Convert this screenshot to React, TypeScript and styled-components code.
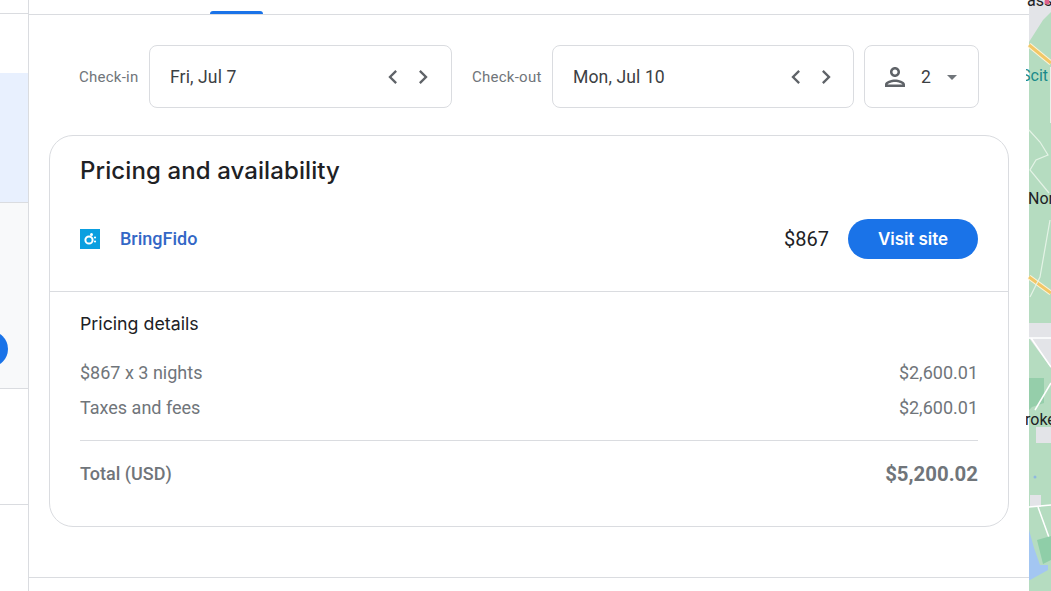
import React from 'react'
import styled, { createGlobalStyle } from 'styled-components'

const Global = createGlobalStyle`
html, body { margin: 0; padding: 0; background: #fff; }
* { box-sizing: border-box; }
body { font-family: Roboto, "Liberation Sans", sans-serif; }
`

const Page = styled.div`
display: flex;
width: 1051px;
height: 591px;
overflow: hidden;
`

const Sidebar = styled.div`
width: 29px;
flex-shrink: 0;
border-right: 1px solid #dadce0;
display: flex;
flex-direction: column;
`

const SideRow = styled.div<{ $h: number; $bg: string; $line?: boolean }>`
height: ${p => p.$h}px;
flex-shrink: 0;
background: ${p => p.$bg};
border-bottom: ${p => (p.$line ? '1px solid #dadce0' : 'none')};
display: flex;
align-items: center;
overflow: hidden;
`

const SideDot = styled.div`
width: 36px;
height: 36px;
border-radius: 50%;
background: #1a73e8;
margin: 106px 0 0 -28px;
flex-shrink: 0;
`

const Main = styled.div`
width: 1000px;
flex-shrink: 0;
display: flex;
flex-direction: column;
`

const TabStrip = styled.div`
height: 15px;
border-bottom: 1px solid #dadce0;
padding-left: 181px;
display: flex;
align-items: flex-end;
`

const TabMark = styled.div`
width: 53px;
height: 3px;
background: #1a73e8;
border-radius: 3px 3px 0 0;
`

const DateRow = styled.div`
display: flex;
align-items: center;
padding: 30px 0 0 50px;
height: 93px;
`

const DateLabel = styled.span<{ $w: number; $gap?: number }>`
width: ${p => p.$w}px;
margin-left: ${p => p.$gap ?? 0}px;
font-size: 15px;
letter-spacing: 0.25px;
color: #70757a;
flex-shrink: 0;
`

const Field = styled.div<{ $w: number }>`
width: ${p => p.$w}px;
height: 63px;
flex-shrink: 0;
border: 1px solid #dadce0;
border-radius: 8px;
display: flex;
align-items: center;
padding-left: 20px;
font-size: 17.6px;
letter-spacing: 0.1px;
color: #3c4043;
`

const DateText = styled.span`
flex: 1;
`

const Arrows = styled.div<{ $end: number }>`
display: flex;
gap: 2px;
padding-right: ${p => p.$end}px;
`

const ArrowIcon = styled.svg`
width: 28px;
height: 28px;
display: block;
fill: #5f6368;
`

const GuestField = styled(Field)`
margin-left: 10px;
padding-left: 15px;
`

const GuestIcon = styled.svg`
width: 30px;
height: 30px;
fill: #5f6368;
flex-shrink: 0;
`

const GuestCount = styled.span`
margin-left: 11px;
`

const Caret = styled.div`
width: 0;
height: 0;
margin: 1px 0 0 16px;
border-left: 5px solid transparent;
border-right: 5px solid transparent;
border-top: 5px solid #70757a;
`

const Card = styled.div`
width: 960px;
height: 392px;
margin: 27px 0 0 20px;
border: 1px solid #dadce0;
border-radius: 24px;
flex-shrink: 0;
`

const CardTop = styled.div`
height: 156px;
border-bottom: 1px solid #dadce0;
padding: 20px 30px 0;
`

const Title = styled.h2`
margin: 0;
font-family: Inter, sans-serif;
font-size: 24px;
line-height: 30px;
font-weight: 500;
letter-spacing: 0.1px;
color: #202124;
`

const Offer = styled.div`
display: flex;
align-items: center;
margin-top: 33px;
`

const Logo = styled.svg`
width: 20px;
height: 20px;
flex-shrink: 0;
display: block;
`

const Provider = styled.span`
margin-left: 20px;
padding-bottom: 2px;
flex: 1;
font-size: 18px;
font-weight: 500;
color: #3367c6;
`

const OfferPrice = styled.span`
font-size: 20px;
color: #202124;
margin-right: 19px;
`

const VisitButton = styled.button`
width: 130px;
height: 40px;
border: none;
border-radius: 20px;
background: #1a73e8;
color: #fff;
font-family: Inter, sans-serif;
font-size: 17px;
font-weight: 600;
letter-spacing: -0.05px;
padding: 0;
`

const Details = styled.div`
padding: 22px 30px 0;
`

const DetailsTitle = styled.h3`
margin: 0 0 21px;
font-family: Inter, sans-serif;
font-size: 17.8px;
line-height: 20px;
font-weight: 400;
color: #202124;
`

const Line = styled.div`
display: flex;
justify-content: space-between;
height: 35px;
align-items: center;
font-size: 18px;
color: #70757a;
`

const Rule = styled.div`
height: 1px;
background: #dadce0;
margin: 15px 0;
`

const TotalLine = styled.div`
display: flex;
justify-content: space-between;
align-items: center;
height: 35px;
color: #70757a;
font-size: 18px;
font-weight: 500;
`

const TotalValue = styled.span`
font-size: 20.4px;
font-weight: 700;
`

const BottomRule = styled.div`
margin-top: 50px;
border-top: 1px solid #dadce0;
`

const MapPane = styled.svg`
width: 22px;
height: 591px;
flex-shrink: 0;
display: block;
overflow: visible;
`

const MapLabel = styled.text<{ $tone?: string }>`
font-family: Roboto, sans-serif;
font-size: 16px;
fill: ${p => p.$tone ?? '#202124'};
`

function DateArrows({ end }: { end: number }) {
  return (
    <Arrows $end={end}>
      <ArrowIcon viewBox="0 0 24 24"><path d="M15.4 7.4 14 6l-6 6 6 6 1.4-1.4-4.6-4.6z" /></ArrowIcon>
      <ArrowIcon viewBox="0 0 24 24"><path d="M10 6 8.6 7.4l4.6 4.6-4.6 4.6L10 18l6-6z" /></ArrowIcon>
    </Arrows>
  )
}

function App() {
  return (
    <Page>
      <Global />
      <Sidebar>
        <SideRow $h={14} $bg="#fff" $line />
        <SideRow $h={59} $bg="#fff" />
        <SideRow $h={130} $bg="#e8f0fe" $line />
        <SideRow $h={186} $bg="#f8f9fa" $line><SideDot /></SideRow>
        <SideRow $h={116} $bg="#fff" $line />
      </Sidebar>
      <Main>
        <TabStrip><TabMark /></TabStrip>
        <DateRow>
          <DateLabel $w={70}>Check-in</DateLabel>
          <Field $w={303}><DateText>Fri, Jul 7</DateText><DateArrows end={14} /></Field>
          <DateLabel $w={80} $gap={20}>Check-out</DateLabel>
          <Field $w={302}><DateText>Mon, Jul 10</DateText><DateArrows end={13} /></Field>
          <GuestField $w={115}>
            <GuestIcon viewBox="0 0 24 24"><path d="M12 6c1.1 0 2 .9 2 2s-.9 2-2 2-2-.9-2-2 .9-2 2-2m0 10c2.7 0 5.8 1.29 6 2H6c.23-.72 3.31-2 6-2M12 4C9.79 4 8 5.79 8 8s1.79 4 4 4 4-1.79 4-4-1.79-4-4-4zm0 10c-2.67 0-8 1.34-8 4v2h16v-2c0-2.66-5.33-4-8-4z" /></GuestIcon>
            <GuestCount>2</GuestCount>
            <Caret />
          </GuestField>
        </DateRow>
        <Card>
          <CardTop>
            <Title>Pricing and availability</Title>
            <Offer>
              <Logo viewBox="0 0 20 20">
                <rect width="20" height="20" fill="#0a9fe0" />
                <circle cx="9" cy="11" r="3.6" fill="none" stroke="#fff" strokeWidth="2" />
                <circle cx="11.5" cy="5.5" r="1.5" fill="#fff" />
                <circle cx="15" cy="8.5" r="1.1" fill="#fff" />
                <circle cx="15" cy="12.5" r="1.1" fill="#fff" />
              </Logo>
              <Provider>BringFido</Provider>
              <OfferPrice>$867</OfferPrice>
              <VisitButton>Visit site</VisitButton>
            </Offer>
          </CardTop>
          <Details>
            <DetailsTitle>Pricing details</DetailsTitle>
            <Line><span>$867 x 3 nights</span><span>$2,600.01</span></Line>
            <Line><span>Taxes and fees</span><span>$2,600.01</span></Line>
            <Rule />
            <TotalLine><span>Total (USD)</span><TotalValue>$5,200.02</TotalValue></TotalLine>
          </Details>
        </Card>
        <BottomRule />
      </Main>
      <MapPane viewBox="0 0 22 591">
        <defs>
          <clipPath id="mapClip"><rect x="-3" width="25" height="591" /></clipPath>
        </defs>
        <rect width="22" height="591" fill="#b5dcc0" />
        <path d="M0 0h22v12L14 20 0 42z" fill="#e3e4e8" />
        <path d="M21 67h1v56h-1z" fill="#e8f2ea" />
        <path d="M0 45 22 63" stroke="#fff4d8" strokeWidth="5" fill="none" />
        <path d="M0 45 22 63" stroke="#f2c766" strokeWidth="3" fill="none" />
        <path d="M0 277 22 293" stroke="#fff4d8" strokeWidth="5" fill="none" />
        <path d="M0 277 22 293" stroke="#f2c766" strokeWidth="3" fill="none" />
        <path d="M0 130 11 142 19 155 7 160 1 170 20 193M21 220 11 277 1 297" stroke="#e4f3e6" strokeWidth="1.2" fill="none" />
        <path d="M0 323h22v45L0 338z" fill="#e3e4e8" />
        <path d="M0 378h15v25L3 407 0 410z" fill="#95ceaa" />
        <path d="M7 427h15v16H7z" fill="#e3e4e8" />
        <path d="M0 338h22M2 338 22 367M22 383 6 410" stroke="#fff" strokeWidth="1.5" fill="none" />
        <circle cx="6" cy="477" r="1.5" fill="#8fb8e0" />
        <path d="M1 495h11v12H1z" fill="#e3e4e8" />
        <path d="M0 507l22-2M9 507l13 36" stroke="#fff" strokeWidth="1.5" fill="none" />
        <path d="M8 540l14-4v24l-8 4z" fill="#8fcea8" />
        <path d="M0 530l5 18 6 17h8v5L1 580H0z" fill="#a3c6f2" />
        <g clipPath="url(#mapClip)">
          <MapLabel x="-8" y="81" $tone="#1a8a8a">Scit</MapLabel>
          <MapLabel x="-1" y="204">Nor</MapLabel>
          <MapLabel x="-4" y="425">roke</MapLabel>
          <MapLabel x="-2" y="6">ass</MapLabel>
        </g>
        <circle cx="18" cy="2" r="2.5" fill="#e0608a" />
      </MapPane>
    </Page>
  )
}

export default App
